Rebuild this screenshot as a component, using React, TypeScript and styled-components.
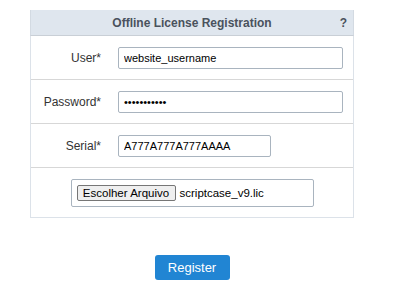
import React from 'react';
import styled, { createGlobalStyle } from 'styled-components';

const GlobalStyle = createGlobalStyle`
  html, body {
    margin: 0;
    padding: 0;
    background: #ffffff;
    font-family: 'Liberation Sans', Arial, sans-serif;
  }
`;

const Page = styled.div`
  padding: 10px 0 0 30px;
  width: 324px;
  display: flex;
  flex-direction: column;
  align-items: center;
`;

const Panel = styled.form`
  width: 324px;
  box-sizing: border-box;
  border: 1px solid #dce2e9;
  border-top: 0;
  display: flex;
  flex-direction: column;
`;

const Header = styled.div`
  position: relative;
  height: 25px;
  background: #dfe6ee;
  border-bottom: 1px solid #c9cfd6;
  display: flex;
  align-items: center;
  justify-content: center;
  margin: 0 -1px;
  border-left: 1px solid #d3dae2;
  border-right: 1px solid #d3dae2;
`;

const Title = styled.span`
  font-size: 12px;
  font-weight: 700;
  color: #4a525d;
`;

const Help = styled.span`
  position: absolute;
  right: 6px;
  top: 6px;
  font-size: 12px;
  font-weight: 700;
  color: #4a525d;
`;

const Row = styled.div<{ $height?: number; $center?: boolean }>`
  height: ${p => p.$height ?? 43}px;
  display: flex;
  align-items: center;
  justify-content: ${p => (p.$center ? 'center' : 'flex-start')};
  gap: 17px;
  border-bottom: 1px solid #d7d7d7;
  &:last-child {
    border-bottom: 0;
  }
`;

const Label = styled.label`
  width: 70px;
  text-align: right;
  font-size: 12px;
  color: #333333;
`;

const Field = styled.input<{ $width: number }>`
  width: ${p => p.$width}px;
  height: 22px;
  box-sizing: border-box;
  border: 1px solid #a9b4bf;
  border-radius: 2px;
  padding: 0 5px;
  font-family: 'Liberation Sans', Arial, sans-serif;
  font-size: 11px;
  color: #000000;
  outline: none;
`;

const FileBox = styled.div`
  width: 243px;
  height: 28px;
  box-sizing: border-box;
  border: 1px solid #a9b4bf;
  border-radius: 2px;
  display: flex;
  align-items: center;
  gap: 4px;
  padding: 0 5px;
  margin-top: 1px;
`;

const FileButton = styled.button.attrs({ type: 'button' })`
  height: 16px;
  width: 99px;
  padding: 0;
  background: #efefef;
  border: 1px solid #767676;
  border-radius: 2px;
  font-family: 'Liberation Sans', Arial, sans-serif;
  font-size: 11.5px;
  color: #000000;
`;

const FileName = styled.span`
  font-size: 11.5px;
  color: #000000;
`;

const RegisterBtn = styled.button.attrs({ type: 'button' })`
  margin-top: 37px;
  width: 75px;
  height: 25px;
  border: 0;
  border-radius: 3px;
  background: #2185d3;
  color: #ffffff;
  font-family: 'Liberation Sans', Arial, sans-serif;
  font-size: 13px;
  cursor: pointer;
`;

export default function App() {
  return (
    <>
      <GlobalStyle />
      <Page>
        <Panel>
          <Header>
            <Title>Offline License Registration</Title>
            <Help>?</Help>
          </Header>
          <Row>
            <Label>User*</Label>
            <Field $width={225} defaultValue="website_username" />
          </Row>
          <Row>
            <Label>Password*</Label>
            <Field $width={225} type="password" defaultValue="abcdefghijk" />
          </Row>
          <Row>
            <Label>Serial*</Label>
            <Field $width={153} defaultValue="A777A777A777AAAA" />
          </Row>
          <Row $height={49} $center>
            <FileBox>
              <FileButton>Escolher Arquivo</FileButton>
              <FileName>scriptcase_v9.lic</FileName>
            </FileBox>
          </Row>
        </Panel>
        <RegisterBtn>Register</RegisterBtn>
      </Page>
    </>
  );
}
